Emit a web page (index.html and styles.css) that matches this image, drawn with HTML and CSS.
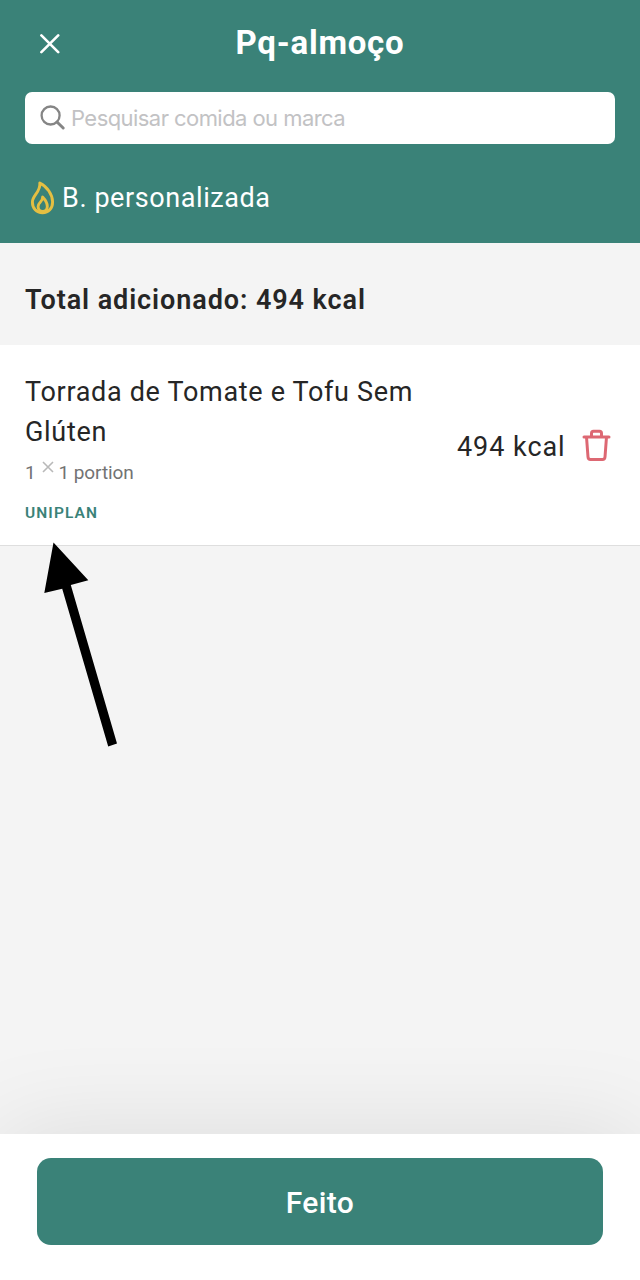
FILE: index.html
```html
<!DOCTYPE html>
<html lang="pt">
<head>
<meta charset="utf-8">
<title>Pq-almoço</title>
<link rel="stylesheet" href="styles.css">
</head>
<body>
<div class="screen">
  <header class="header">
    <div class="titlebar">
      <svg class="close" width="20" height="20" viewBox="0 0 20 20"><path d="M1.4 1.4 18.2 18.2M18.2 1.4 1.4 18.2"/></svg>
      <h1 class="title"><span class="title-text">Pq-almoço</span></h1>
    </div>
    <div class="search">
      <svg class="search-icon" width="26" height="26" viewBox="0 0 26 26"><circle cx="10.6" cy="10.5" r="9"/><path d="M17 17 23.2 23" class="handle"/></svg>
      <span class="placeholder">Pesquisar comida ou marca</span>
    </div>
    <div class="custom">
      <svg class="flame" width="26" height="34" viewBox="0 0 26 34"><path d="M9.8 2C17 5.500 22.600 13.500 22.600 21C22.600 27.500 18.500 31.800 12.500 31.800C6.500 31.800 2.400 27.500 2.400 21C2.400 14.500 11 10.500 9.800 2Z"/><path d="M12.600 16C15 18.500 17.300 21.500 17.300 25.300C17.300 28.500 15.500 30.500 12.800 30.500C10 30.500 8.100 28.500 8.100 25.500C8.100 21.500 13 20.500 12.600 16Z"/></svg>
      <span class="custom-text">B. personalizada</span>
    </div>
  </header>
  <div class="total">Total adicionado: 494 kcal</div>
  <main class="item">
    <div class="details">
      <div class="name">Torrada de Tomate e Tofu Sem Glúten</div>
      <div class="portion"><span>1</span><svg class="times" width="12" height="12" viewBox="0 0 12 12"><path d="M1 1 11 11M11 1 1 11"/></svg><span class="portion-text">1 portion</span></div>
      <div class="brand">UNIPLAN</div>
    </div>
    <span class="kcal">494 kcal</span>
    <svg class="trash" width="29" height="33" viewBox="0 0 29 33"><path d="M2 8H27M9.500 7.500V4.500Q9.500 2.300 11.500 2.300H17.500Q19.500 2.300 19.500 4.500V7.500M4.500 8 6 28Q6.200 30.500 8.500 30.500H20.500Q22.800 30.500 23 28L24.500 8"/></svg>
  </main>
  <svg class="arrow" width="76" height="206" viewBox="0 0 76 206"><path d="M13.500 -.5 48.300 37.200 30.800 42 77 200.500 68.200 203.500 22.200 45.800 4.300 50Z"/></svg>
  <footer class="footer"><button class="done">Feito</button></footer>
</div>
</body>
</html>
```
FILE: styles.css
```css
* { box-sizing: border-box; }
body { margin: 0; font-family: Roboto, "Liberation Sans", sans-serif; color: #262626; }
.screen { position: relative; width: 640px; height: 1280px; background: #f4f4f4; display: flex; flex-direction: column; overflow: hidden; }
svg { fill: none; flex: none; display: block; }
.header { height: 243px; background: #3a8278; padding: 0 25px; color: #fff; }
.titlebar { height: 92px; display: grid; grid-template-columns: 50px 1fr 50px; align-items: start; }
.close { margin: 34px 0 0 15px; stroke: #fff; stroke-width: 2.6; stroke-linecap: round; }
.title { margin: 22px 0 0; text-align: center; font-size: 33px; line-height: 42px; font-weight: 700; white-space: nowrap; }
.title-text { letter-spacing: 0.75px; }
.search { height: 52px; border-radius: 7px; background: #fff; display: flex; align-items: center; padding-left: 15px; gap: 5px; }
.search-icon { stroke: #858585; stroke-width: 2.3; }
.handle { stroke-width: 3; stroke-linecap: round; }
.placeholder { font-family: Inter, sans-serif; font-size: 22px; letter-spacing: -0.56px; color: #c2c2c4; }
.custom { display: flex; align-items: center; height: 36px; margin-top: 36px; padding-left: 5px; gap: 6px; font-size: 27px; letter-spacing: 0.58px; }
.flame { stroke: #e5bf42; stroke-width: 2.9; stroke-linejoin: round; }
.total { height: 102px; padding: 12px 0 0 25px; display: flex; align-items: center; font-size: 27px; font-weight: 600; letter-spacing: 0.92px; }
.item { height: 203px; margin-bottom: -2px; background: #fff; border-bottom: 1px solid #dedede; padding: 27px 29px 0 25px; display: flex; align-items: flex-start; height: 201px; }
.details { width: 432px; }
.name { width: 400px; font-size: 27px; line-height: 40px; letter-spacing: 0.68px; }
.portion { display: flex; align-items: flex-start; height: 40px; line-height: 42px; font-size: 19px; letter-spacing: -0.1px; color: #737373; }
.times { stroke: #b9b9b9; stroke-width: 1.6; margin: 9px 5px 0 6px; }
.brand { font-size: 15.500px; line-height: 42px; font-weight: 600; letter-spacing: 1.1px; color: #3a8278; }
.kcal { font-size: 27px; line-height: 40px; letter-spacing: 0.95px; margin-top: 55px; width: 125px; white-space: nowrap; }
.trash { margin-top: 57px; stroke: #dd6873; stroke-width: 3; stroke-linecap: round; stroke-linejoin: round; }
.arrow { position: absolute; left: 40px; top: 543px; overflow: visible; fill: #000; }
.footer { margin-top: auto; height: 146px; padding: 24px 37px 0; background: #fff; box-shadow: 0 0 100px rgba(0,0,0,.1); }
.done { display: block; width: 566px; height: 87px; padding: 2px 0 0; border: 0; border-radius: 14px; background: #3a8278; color: #fff; font: 500 30px Roboto, sans-serif; letter-spacing: 0.4px; }
```
